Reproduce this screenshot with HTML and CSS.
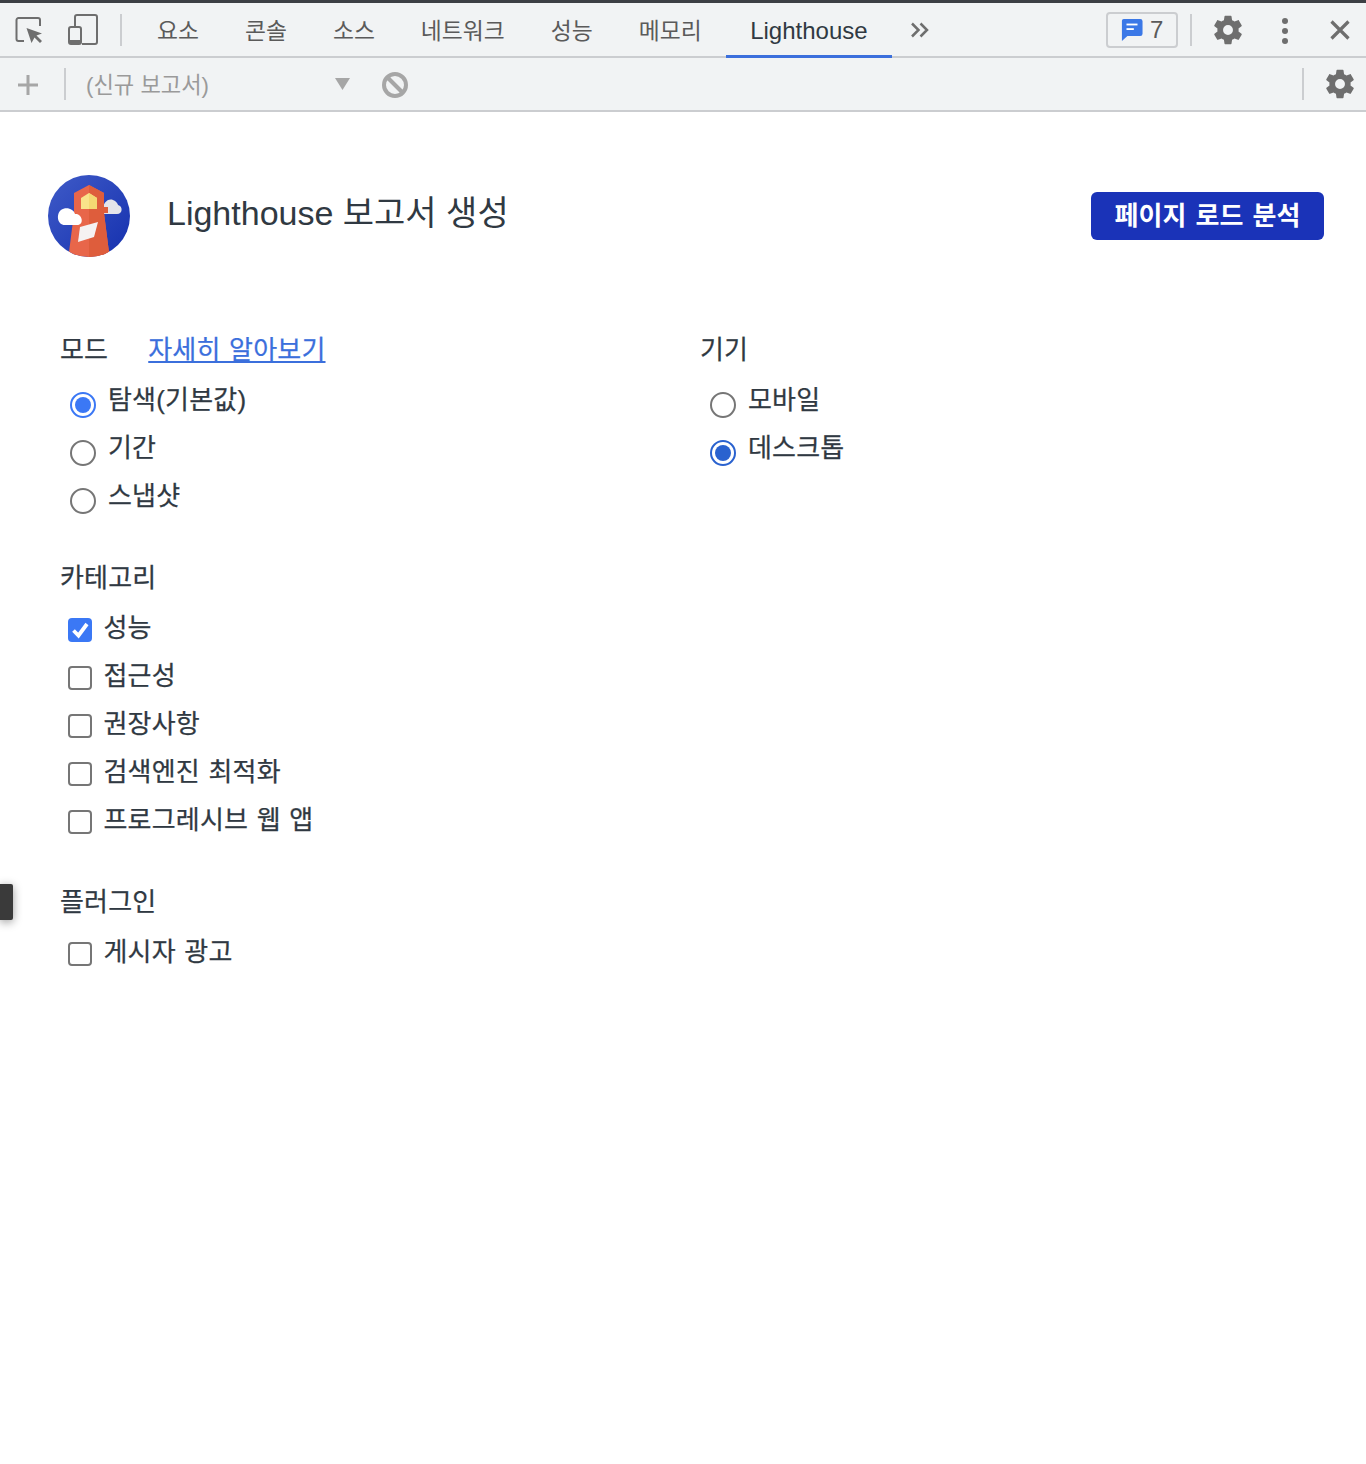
FILE: index.html
```html
<!DOCTYPE html>
<html lang="ko">
<head>
<meta charset="utf-8">
<title>Lighthouse</title>
<link rel="stylesheet" href="styles.css">
</head>
<body>
<div class="tabbar">
  <svg class="ic-inspect" width="28" height="28" viewBox="0 0 28 28"><path d="M9 26H3.500A2 2 0 0 1 1.500 24V5A2 2 0 0 1 3.500 3H23A2 2 0 0 1 25 5V11" fill="none" stroke="#6e6e6e" stroke-width="2"/><path d="M11.500 13L27 18.500L21.500 20.500L27 26L25 28L19.500 22.500L16.500 28Z" fill="#6e6e6e"/></svg>
  <svg class="ic-device" width="30" height="31" viewBox="0 0 30 31"><path d="M7 12V3A2 2 0 0 1 9 1H27A2 2 0 0 1 29 3V28A2 2 0 0 1 27 30H14" fill="none" stroke="#6e6e6e" stroke-width="2"/><rect x="1" y="13" width="12" height="17" rx="2" fill="none" stroke="#6e6e6e" stroke-width="2"/><rect x="1" y="26" width="12" height="4" fill="#6e6e6e"/></svg>
  <span class="vsep tab-sep"></span>
  <nav class="tabs">
    <span class="tab">요소</span>
    <span class="tab">콘솔</span>
    <span class="tab">소스</span>
    <span class="tab">네트워크</span>
    <span class="tab">성능</span>
    <span class="tab">메모리</span>
    <span class="tab tab-active">Lighthouse</span>
  </nav>
  <svg class="ic-more" width="20" height="16" viewBox="0 0 20 16"><path d="M2 1.500L8.500 8L2 14.500M10.500 1.500L17 8L10.500 14.500" fill="none" stroke="#6e6e6e" stroke-width="2.500"/></svg>
  <div class="right-tools">
    <span class="badge">
      <svg width="22" height="24" viewBox="0 0 24 26"><path d="M3 1H21A2.500 2.500 0 0 1 23.500 3.500V17A2.500 2.500 0 0 1 21 19.500H7L1 25V3A2 2 0 0 1 3 1Z" fill="#3b78e7"/><rect x="6" y="6" width="12" height="2" fill="#fff"/><rect x="6" y="11" width="8" height="2" fill="#fff"/></svg>
      <span class="badge-num">7</span>
    </span>
    <span class="vsep badge-sep"></span>
    <svg class="ic-gear" width="34" height="34" viewBox="0 0 24 24"><path d="M19.430 12.980c.04-.32.070-.64.070-.98s-.03-.66-.07-.98l2.110-1.650c.19-.15.240-.42.120-.64l-2-3.460c-.12-.22-.39-.3-.61-.22l-2.490 1c-.52-.4-1.080-.73-1.690-.98l-.38-2.650A.488.488 0 0 0 14 2h-4c-.25 0-.46.18-.49.420l-.38 2.650c-.61.25-1.170.59-1.690.98l-2.490-1c-.23-.09-.49 0-.61.22l-2 3.460c-.13.22-.07.49.12.64l2.110 1.650c-.04.32-.07.65-.07.98s.03.66.07.98l-2.110 1.650c-.19.15-.24.42-.12.64l2 3.460c.12.22.39.3.61.22l2.490-1c.52.4 1.080.73 1.690.98l.38 2.650c.03.24.24.42.49.42h4c.25 0 .46-.18.49-.42l.38-2.650c.61-.25 1.170-.59 1.690-.98l2.490 1c.23.09.49 0 .61-.22l2-3.460c.12-.22.07-.49-.12-.64l-2.110-1.650zM12 15.500a3.500 3.500 0 1 1 0-7 3.500 3.500 0 0 1 0 7z" fill="#6e6e6e"/></svg>
    <span class="dots"><i></i><i></i><i></i></span>
    <svg class="ic-close" width="22" height="22" viewBox="0 0 22 22"><path d="M2.500 2.500L19.500 19.500M19.500 2.500L2.500 19.500" stroke="#6e6e6e" stroke-width="3.200"/></svg>
  </div>
</div>

<div class="toolbar">
  <svg class="ic-plus" width="20" height="20" viewBox="0 0 20 20"><path d="M10 0V20M0 10H20" stroke="#a6a6a6" stroke-width="3"/></svg>
  <span class="vsep plus-sep"></span>
  <span class="report-select">(신규 보고서)</span>
  <svg class="ic-caret" width="15" height="12" viewBox="0 0 15 12"><path d="M0 0H15L7.500 12Z" fill="#a6a6a6"/></svg>
  <svg class="ic-block" width="28" height="28" viewBox="0 0 28 28"><circle cx="14" cy="14" r="11" fill="none" stroke="#a6a6a6" stroke-width="4"/><path d="M6 6L22 22" stroke="#a6a6a6" stroke-width="4"/></svg>
  <span class="vsep toolbar-sep"></span>
  <svg class="ic-gear2" width="34" height="34" viewBox="0 0 24 24"><path d="M19.430 12.980c.04-.32.070-.64.070-.98s-.03-.66-.07-.98l2.110-1.650c.19-.15.240-.42.120-.64l-2-3.460c-.12-.22-.39-.3-.61-.22l-2.490 1c-.52-.4-1.080-.73-1.690-.98l-.38-2.650A.488.488 0 0 0 14 2h-4c-.25 0-.46.18-.49.420l-.38 2.650c-.61.25-1.170.59-1.690.98l-2.490-1c-.23-.09-.49 0-.61.22l-2 3.460c-.13.22-.07.49.12.64l2.110 1.650c-.04.32-.07.65-.07.98s.03.66.07.98l-2.110 1.650c-.19.15-.24.42-.12.64l2 3.460c.12.22.39.3.61.22l2.490-1c.52.4 1.080.73 1.690.98l.38 2.650c.03.24.24.42.49.42h4c.25 0 .46-.18.49-.42l.38-2.650c.61-.25 1.170-.59 1.690-.98l2.490 1c.23.09.49 0 .61-.22l2-3.460c.12-.22.07-.49-.12-.64l-2.110-1.650zM12 15.500a3.500 3.500 0 1 1 0-7 3.500 3.500 0 0 1 0 7z" fill="#6e6e6e"/></svg>
</div>

<main class="panel">
  <header class="head">
    <svg class="logo" width="82" height="82" viewBox="48 175 82 82">
      <defs>
        <linearGradient id="sky" x1="0" y1="0" x2="1" y2="1"><stop offset="0" stop-color="#3f5bc8"/><stop offset="1" stop-color="#1530ae"/></linearGradient>
        <clipPath id="disc"><circle cx="89" cy="216" r="41"/></clipPath>
      </defs>
      <circle cx="89" cy="216" r="41" fill="url(#sky)"/>
      <g clip-path="url(#disc)">
        <path d="M103 212C102 203 108 198 113 200C116 201 118 204 118 205C123 206 123 214 117 214H103Z" fill="#e4e4ea"/>
        <path d="M89 185L104 193V207H108V213H104L110 260H68L74 213V193Z" fill="#e8664a"/>
        <path d="M89 185L104 193V207H108V213H104L110 260H89Z" fill="#de5d3c"/>
        <path d="M89 193L97 198V209H81V198Z" fill="#f9e38a"/>
        <path d="M89 193L97 198V209H89Z" fill="#f4d873"/>
        <path d="M80 227L98 222L94 237L78 242Z" fill="#f5f2f2"/>
        <path d="M65 225C57 225 56 214 61 210C66 206 74 209 75 214C82 213 85 225 77 225Z" fill="#fff"/>
      </g>
    </svg>
    <h1 class="title">Lighthouse 보고서 생성</h1>
    <button class="run">페이지 로드 분석</button>
  </header>

  <div class="columns">
    <div class="col">
      <section class="group">
        <div class="label">모드<a class="learn" href="#">자세히 알아보기</a></div>
        <div class="row"><span class="radio on"></span>탐색(기본값)</div>
        <div class="row"><span class="radio"></span>기간</div>
        <div class="row"><span class="radio"></span>스냅샷</div>
      </section>
      <section class="group">
        <div class="label">카테고리</div>
        <div class="row"><span class="check on"><svg width="24" height="24" viewBox="0 0 24 24"><path d="M5.500 12.500L10.500 17.500L19 6" fill="none" stroke="#fff" stroke-width="3.800"/></svg></span>성능</div>
        <div class="row"><span class="check"></span>접근성</div>
        <div class="row"><span class="check"></span>권장사항</div>
        <div class="row"><span class="check"></span>검색엔진 최적화</div>
        <div class="row"><span class="check"></span>프로그레시브 웹 앱</div>
      </section>
      <section class="group">
        <div class="label">플러그인</div>
        <div class="row"><span class="check"></span>게시자 광고</div>
      </section>
    </div>
    <div class="col">
      <section class="group">
        <div class="label">기기</div>
        <div class="row"><span class="radio"></span>모바일</div>
        <div class="row"><span class="radio on blue-dark"></span>데스크톱</div>
      </section>
    </div>
  </div>
</main>
<div class="side-tab"></div>
</body>
</html>
```
FILE: styles.css
```css
* { box-sizing: border-box; }
html, body { margin: 0; padding: 0; }
body {
  position: relative;
  height: 1464px;
  background: #fff;
  color: #303942;
  font-family: "Liberation Sans", "Noto Sans CJK KR", sans-serif;
  overflow: hidden;
}
svg { display: block; flex: none; }

.tabbar {
  display: flex;
  align-items: center;
  height: 58px;
  background: #f1f3f4;
  border-top: 3px solid #3c3f44;
  border-bottom: 2px solid #cbcdd0;
}
.vsep { display: block; flex: none; width: 2px; background: #cbcdd0; }
.ic-inspect { margin: -1px 0 0 15px; }
.ic-device { margin: 0 0 0 25px; }
.tab-sep { height: 32px; margin-left: 22px; }
.tabs { display: flex; align-self: stretch; margin-left: 12px; }
.tab {
  display: flex;
  align-items: center;
  padding: 0 23px 1px;
  font-size: 22.8px;
  color: #5a5a5a;
  margin-bottom: -2px;
  border-bottom: 2px solid transparent;
}
.tab-active { margin-left: 1.500px; padding: 4px 24px 0; font-size: 24px; color: #303942; border-bottom: 3px solid #3b6fdc; }
.ic-more { margin-left: 18px; }
.right-tools { display: flex; align-items: center; margin-left: auto; }
.badge {
  display: flex;
  align-items: center;
  width: 72px;
  height: 36px;
  padding-left: 13px;
  gap: 7px;
  border: 2px solid #cbcdd0;
  border-radius: 4px;
  font-size: 24px;
  color: #5a5a5a;
}
.badge-sep { height: 32px; margin-left: 12px; }
.ic-gear { margin: 1px 0 0 19px; }
.dots { display: flex; flex-direction: column; gap: 4px; margin: 2px 0 0 37px; }
.dots i { display: block; width: 6px; height: 6px; border-radius: 50%; background: #6e6e6e; }
.ic-close { margin: 0 15px 0 41px; }

.toolbar {
  display: flex;
  align-items: center;
  height: 54px;
  background: #f1f3f4;
  border-bottom: 2px solid #cbcdd0;
}
.ic-plus { margin: 2px 0 0 18px; }
.plus-sep { height: 32px; margin-left: 26px; }
.report-select { width: 249px; margin-left: 20px; padding-bottom: 2px; font-size: 22.2px; color: #9a9a9a; }
.ic-block { margin: 2px 0 0 31px; }
.toolbar-sep { height: 32px; margin-left: auto; }
.ic-gear2 { margin: 0 9px 0 19px; }

.panel { padding: 63px 42px 0 48px; }
.head { display: flex; align-items: center; height: 82px; }
.title { margin: -12px 0 0 37px; font-size: 34px; font-weight: 400; color: #303942; }
.run {
  width: 233px;
  height: 48px;
  margin: 0 0 0 auto;
  padding: 0 0 6px;
  border: 0;
  border-radius: 6px;
  background: #1a33b8;
  color: #fff;
  word-spacing: 2px;
  font: 700 26px "Liberation Sans", "Noto Sans CJK KR", sans-serif;
}
.columns { display: grid; grid-template-columns: 640px 1fr; margin: 68px 0 0 12px; }
.group { display: flex; flex-direction: column; margin-bottom: 33px; }
.label,
.row {
  display: flex;
  align-items: center;
  height: 48px;
  font-size: 26px;
  letter-spacing: .2px;
  word-spacing: 1px;
  -webkit-text-stroke: .25px currentColor;
}
.label { margin-bottom: 3px; padding-bottom: 3px; }
.learn { margin-left: 40px; color: #3b6fdc; text-decoration: underline; }
.row { gap: 12px; padding-bottom: 5px; }
.radio {
  position: relative;
  flex: none;
  width: 26px;
  height: 26px;
  margin: 15px 0 0 10px;
  border: 2px solid #767676;
  border-radius: 50%;
}
.radio.on { border-color: #3b78f5; }
.radio.on::after {
  content: "";
  position: absolute;
  inset: 3px;
  border-radius: 50%;
  background: #3b78f5;
}
.radio.blue-dark { border-color: #2a62cf; }
.radio.blue-dark::after { background: #2a62cf; }
.check {
  flex: none;
  width: 24px;
  height: 24px;
  margin: 9px -.5px 0 8px;
  border: 2px solid #767676;
  border-radius: 4px;
}
.check.on { border: 0; background: #3b78f5; }
.side-tab {
  position: absolute;
  left: 0;
  top: 884px;
  width: 13px;
  height: 36px;
  background: #3a3a3a;
  border-radius: 0 2px 2px 0;
  box-shadow: 0 2px 10px rgba(0,0,0,.4);
}
```
